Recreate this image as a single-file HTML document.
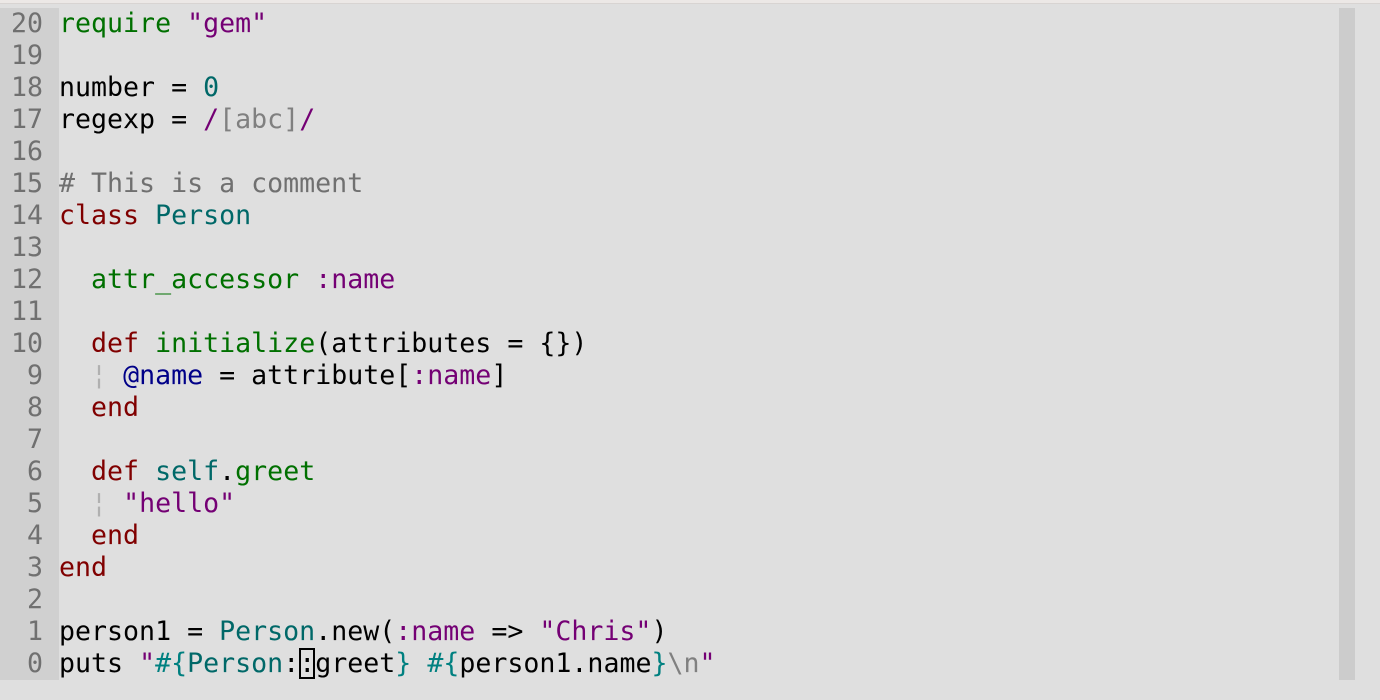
<!DOCTYPE html>
<html><head><style>
html,body{margin:0;padding:0;width:1380px;height:700px;overflow:hidden;background:#dfdfdf;}
.top{position:absolute;left:0;top:0;width:1380px;height:3px;background:#ece8e6;border-bottom:1px solid #d8d4d2;}
.gut{position:absolute;left:0;top:8px;width:59px;height:672px;background:#d0d0d0;}
.sb{position:absolute;left:1339px;top:8px;width:16px;height:672px;background:#cccccc;}
pre{position:absolute;margin:0;top:8px;font-family:"DejaVu Sans Mono","Liberation Mono",monospace;font-size:26.6px;line-height:32px;}
.nums{left:0;width:43px;text-align:right;color:#707070;}
.code{left:59px;color:#000;}
.g{color:#007000}.p{color:#740074}.t{color:#006868}.r{color:#800000}.c{color:#707070}.b{color:#000088}.tc{color:#008080}.gr{color:#808080}.ig{color:#b0b0b0}
.cur{outline:2px solid #000;outline-offset:-2px}
</style></head><body>
<div class="top"></div><div class="gut"></div><div class="sb"></div>
<pre class="nums">20
19
18
17
16
15
14
13
12
11
10
 9
 8
 7
 6
 5
 4
 3
 2
 1
 0</pre>
<pre class="code"><span class="g">require</span> <span class="p">"gem"</span>

number = <span class="t">0</span>
regexp = <span class="p">/</span><span class="gr">[abc]</span><span class="p">/</span>

<span class="c"># This is a comment</span>
<span class="r">class</span> <span class="t">Person</span>

  <span class="g">attr_accessor</span> <span class="p">:name</span>

  <span class="r">def</span> <span class="g">initialize</span>(attributes = {})
  <span class="ig">¦</span> <span class="b">@name</span> = attribute[<span class="p">:name</span>]
  <span class="r">end</span>

  <span class="r">def</span> <span class="t">self</span>.<span class="g">greet</span>
  <span class="ig">¦</span> <span class="p">"hello"</span>
  <span class="r">end</span>
<span class="r">end</span>

person1 = <span class="t">Person</span>.new(<span class="p">:name</span> =&gt; <span class="p">"Chris"</span>)
puts <span class="p">"</span><span class="tc">#{</span><span class="t">Person</span>:<span class="cur">:</span>greet<span class="tc">}</span> <span class="tc">#{</span>person1.name<span class="tc">}</span><span class="gr">\n</span><span class="p">"</span></pre>
</body></html>
